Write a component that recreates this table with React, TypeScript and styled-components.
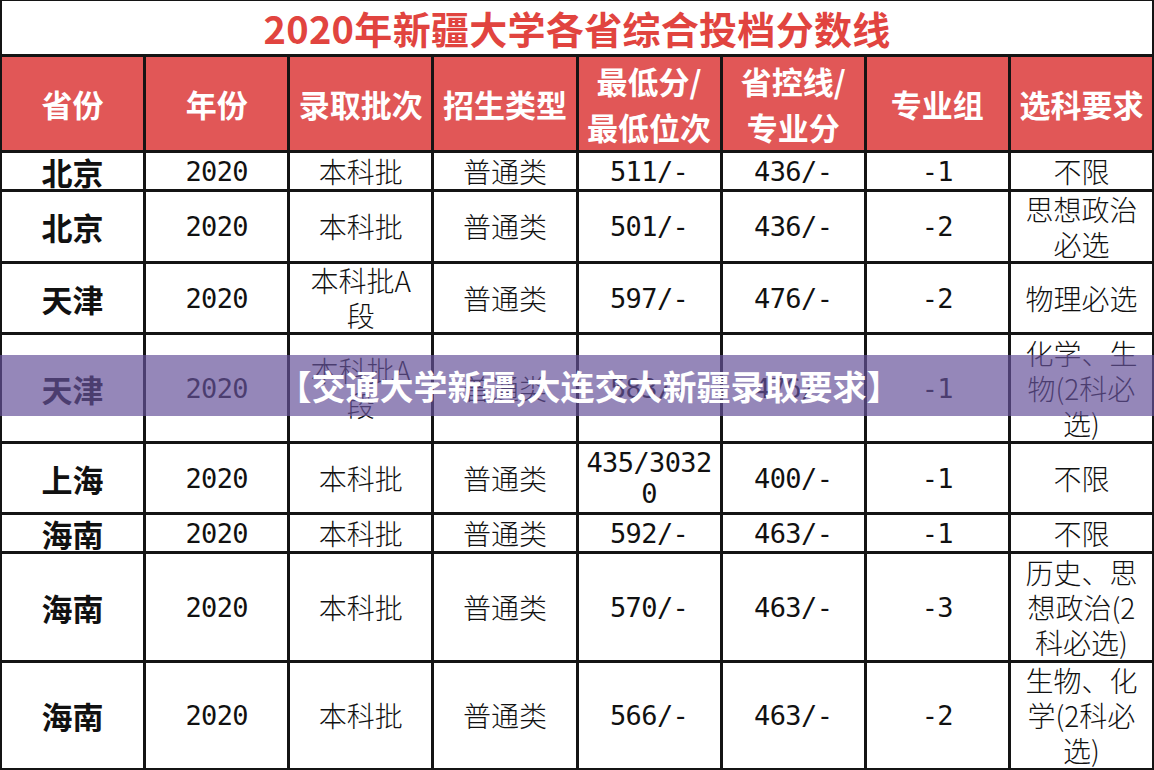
import React from 'react';
import styled, {createGlobalStyle} from 'styled-components';

const Global = createGlobalStyle`
    html, body {
        margin: 0;
        padding: 0;
        background: #ffffff;
    }
    body {
        font-family: "Noto Sans CJK SC", "Noto Sans", sans-serif;
        overflow: hidden;
    }
`;

const Page = styled.div`
    position: relative;
    width: 1154px;
    height: 770px;
`;

const Sheet = styled.section`
    display: flex;
    flex-direction: column;
    gap: 3px;
    box-sizing: border-box;
    width: 100%;
    height: 100%;
    padding: 1px 2px 2px 2px;
    background: #141414;
`;

const Title = styled.h1`
    margin: 0;
    height: 53px;
    display: flex;
    align-items: center;
    justify-content: center;
    background: #ffffff;
    color: #e1443f;
    font-family: "Noto Sans CJK SC", sans-serif;
    font-weight: 700;
    font-size: 38px;
    letter-spacing: 0.3px;
`;

const Row = styled.div<{$h: number}>`
    display: grid;
    grid-template-columns: repeat(8, 1fr);
    gap: 3px;
    height: ${p => p.$h}px;
`;

const HeadCell = styled.div`
    display: flex;
    flex-direction: column;
    align-items: center;
    justify-content: center;
    background: #e15757;
    color: #ffffff;
    font-family: "Noto Sans CJK SC", sans-serif;
    font-weight: 700;
    font-size: 31px;
    line-height: 46px;
    white-space: nowrap;
    overflow: hidden;
`;

const Cell = styled.div<{$bold?: boolean}>`
    display: flex;
    flex-direction: column;
    align-items: center;
    justify-content: center;
    background: #ffffff;
    color: #111111;
    font-family: "Noto Sans CJK SC", sans-serif;
    font-weight: ${p => (p.$bold ? 700 : 300)};
    font-size: ${p => (p.$bold ? 31 : 28)}px;
    line-height: 35px;
    overflow: hidden;
`;

const Line = styled.span<{$mono?: boolean}>`
    display: block;
    white-space: nowrap;
    ${p =>
        p.$mono &&
        `
        font-family: "DejaVu Sans Mono", "Liberation Mono", monospace;
        font-size: 27px;
        letter-spacing: -0.6px;
        line-height: 31px;
    `}
`;

const Banner = styled.div`
    position: absolute;
    left: 0;
    right: 0;
    top: 355px;
    height: 61px;
    display: flex;
    align-items: center;
    justify-content: center;
    background: rgba(101, 81, 154, 0.69);
    color: #ffffff;
    font-family: "Noto Sans CJK SC", sans-serif;
    font-weight: 700;
    font-size: 34px;
    padding-left: 24px;
    box-sizing: border-box;
`;

const heads: string[][] = [
    ['省份'],
    ['年份'],
    ['录取批次'],
    ['招生类型'],
    ['最低分/', '最低位次'],
    ['省控线/', '专业分'],
    ['专业组'],
    ['选科要求'],
];

type Val = string | string[];

const rows: {h: number; cells: Val[]}[] = [
    {h: 36, cells: ['北京', '2020', '本科批', '普通类', '511/-', '436/-', '-1', '不限']},
    {h: 69, cells: ['北京', '2020', '本科批', '普通类', '501/-', '436/-', '-2', ['思想政治', '必选']]},
    {h: 68, cells: ['天津', '2020', ['本科批A', '段'], '普通类', '597/-', '476/-', '-2', '物理必选']},
    {h: 106, cells: ['天津', '2020', ['本科批A', '段'], '普通类', '583/-', '476/-', '-1', ['化学、生', '物(2科必', '选)']]},
    {h: 68, cells: ['上海', '2020', '本科批', '普通类', ['435/3032', '0'], '400/-', '-1', '不限']},
    {h: 36, cells: ['海南', '2020', '本科批', '普通类', '592/-', '463/-', '-1', '不限']},
    {h: 106, cells: ['海南', '2020', '本科批', '普通类', '570/-', '463/-', '-3', ['历史、思', '想政治(2', '科必选)']]},
    {h: 105, cells: ['海南', '2020', '本科批', '普通类', '566/-', '463/-', '-2', ['生物、化', '学(2科必', '选)']]},
];

// columns holding numbers use the monospace face
const monoCols = [1, 4, 5, 6];

const App = () => {
    return (
        <Page>
            <Global />
            <Sheet>
                <Title>2020年新疆大学各省综合投档分数线</Title>
                <Row $h={93}>
                    {heads.map((h, i) => (
                        <HeadCell key={i}>
                            {h.map(t => <span key={t}>{t}</span>)}
                        </HeadCell>
                    ))}
                </Row>
                {rows.map((r, ri) => (
                    <Row $h={r.h} key={ri}>
                        {r.cells.map((c, ci) => {
                            const lines = Array.isArray(c) ? c : [c];
                            return (
                                <Cell key={ci} $bold={ci === 0}>
                                    {lines.map((t, li) => (
                                        <Line key={li} $mono={monoCols.includes(ci)}>{t}</Line>
                                    ))}
                                </Cell>
                            );
                        })}
                    </Row>
                ))}
            </Sheet>
            <Banner>【交通大学新疆,大连交大新疆录取要求】</Banner>
        </Page>
    );
};

export default App;
